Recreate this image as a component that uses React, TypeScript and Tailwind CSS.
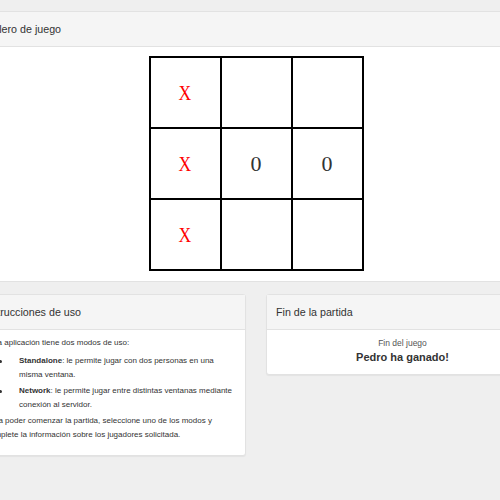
const board: string[] = ['X', '', '', 'X', '0', '0', 'X', '', ''];

function PanelHeading({ title, pad = 'px-[10px]' }: { title: string; pad?: string }) {
  return (
    <div
      className={`h-[35px] flex items-center ${pad} bg-[#f5f5f5] border-b border-[#e2e2e2] text-[10.7px] text-[#333]`}
    >
      {title}
    </div>
  );
}

function Bullet({ children, className = '' }: { children: React.ReactNode; className?: string }) {
  return (
    <li className={`flex ${className}`}>
      <span className="w-[33px] shrink-0">
        <span className="block ml-[13px] mt-[6px] w-[3px] h-[3px] rounded-full bg-[#333]" />
      </span>
      <span>{children}</span>
    </li>
  );
}

export default function App() {
  return (
    <div
      className="w-[500px] h-[500px] overflow-hidden bg-[#efefef]"
      style={{ fontFamily: '"Liberation Sans", Arial, sans-serif' }}
    >
      <div className="-ml-[28px] w-[568px] pt-[11px]">
        {/* Tablero */}
        <div className="bg-white border-t border-b border-[#e2e2e2]">
          <PanelHeading title="Tablero de juego" />
          <div className="flex justify-center pt-[9px] pb-[10px]">
            <div className="grid grid-cols-3 gap-[2px] p-[2px] bg-black">
              {board.map((v, i) => (
                <div
                  key={i}
                  className={`w-[69px] h-[69px] bg-white flex items-center justify-center text-[22px] ${
                    v === 'X' ? 'text-[#ff0000]' : 'text-[#333]'
                  }`}
                  style={{ fontFamily: '"Liberation Serif", "Times New Roman", serif' }}
                >
                  <span className={v === 'X' ? 'inline-block scale-x-[0.8]' : ''}>{v}</span>
                </div>
              ))}
            </div>
          </div>
        </div>

        <div className="flex gap-[20px] mt-[12px]">
          {/* Instrucciones */}
          <div className="w-[274px] bg-white border border-[#e2e2e2] rounded-[3px] shadow-[0_1px_1px_rgba(0,0,0,0.05)] self-start">
            <PanelHeading title="Instrucciones de uso" />
            <div className="pl-[13px] pr-[8px] pt-[6px] pb-[13px] text-[8px] leading-[14px] text-[#333]">
              <p className="mb-[4px]">Esta aplicación tiene dos modos de uso:</p>
              <ul className="mb-[2px]">
                <Bullet className="mb-[2px]">
                  <b>Standalone</b>: le permite jugar con dos personas en una misma ventana.
                </Bullet>
                <Bullet>
                  <b>Network</b>: le permite jugar entre distintas ventanas mediante conexión al servidor.
                </Bullet>
              </ul>
              <p>
                Para poder comenzar la partida, seleccione uno de los modos y complete la información sobre los
                jugadores solicitada.
              </p>
            </div>
          </div>

          {/* Fin de la partida */}
          <div className="w-[273px] bg-white border border-[#e2e2e2] rounded-[3px] shadow-[0_1px_1px_rgba(0,0,0,0.05)] self-start">
            <PanelHeading title="Fin de la partida" pad="px-[9px]" />
            <div className="pt-[7px] pb-[9px] text-center">
              <div className="text-[8.5px] leading-[12px] text-[#555]">Fin del juego</div>
              <div className="text-[11px] leading-[16px] font-bold text-[#333]">Pedro ha ganado!</div>
            </div>
          </div>
        </div>
      </div>
    </div>
  );
}
